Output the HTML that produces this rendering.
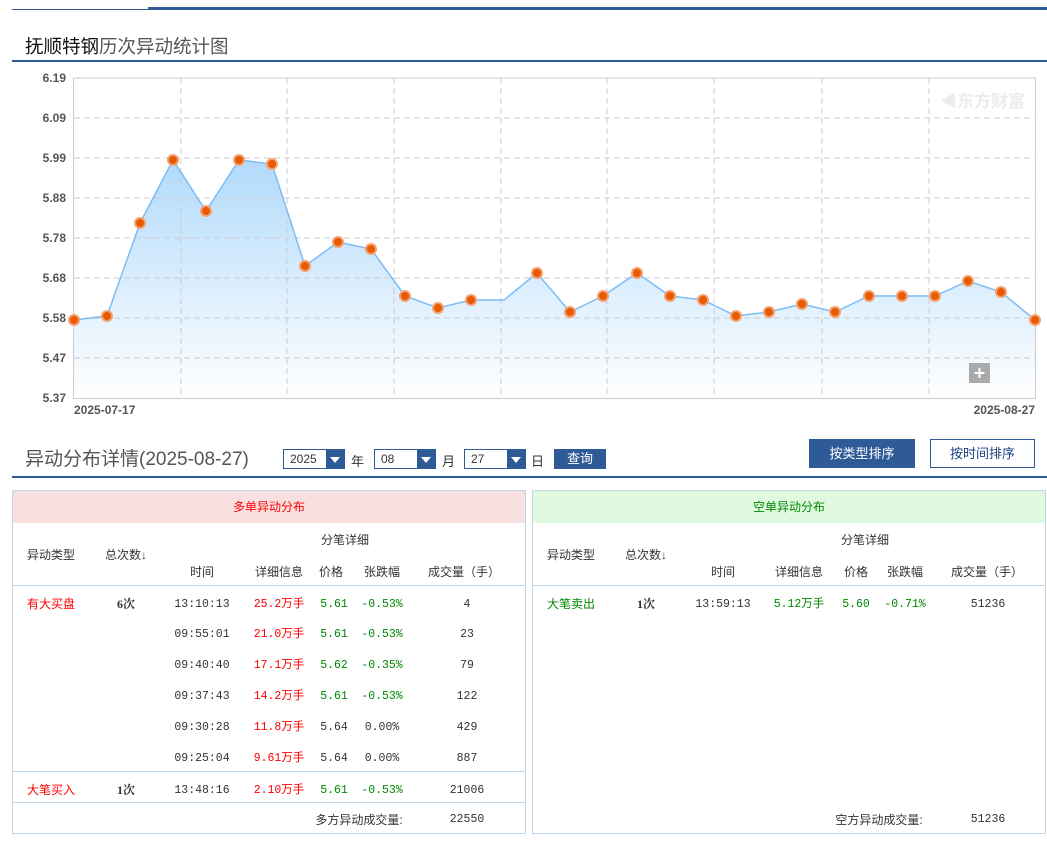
<!DOCTYPE html>
<html><head><meta charset="utf-8"><style>
*{margin:0;padding:0;box-sizing:border-box}
body{width:1047px;height:842px;background:#fff;font-family:"Liberation Sans","Noto Sans CJK SC",sans-serif;position:relative;overflow:hidden;color:#333}
.abs{position:absolute}
.box{position:absolute;border:1px solid #c0d6e8;top:490px;height:344px;width:514px}
.box .hd{height:32px;line-height:32px;text-align:center;font-size:12px}
.t{position:absolute;font-size:12px;white-space:nowrap;transform:translateX(-50%)}
.m{font-family:"Liberation Mono","Noto Sans CJK SC",monospace;font-size:11.5px;margin-top:2px}
.ln{position:absolute;left:0;right:0;height:1px;background:#c0d6e8}
.red{color:#f00}.grn{color:#080}
.sel{position:absolute;top:449px;height:20px;border:1px solid #2e5a96;background:#fff;font-size:12px;line-height:18px;padding-left:6px}
.sel i{position:absolute;right:0;top:0;width:18px;height:18px;background:#2e5a96}
.sel i:after{content:"";position:absolute;left:4px;top:7px;border-left:5px solid transparent;border-right:5px solid transparent;border-top:6px solid #fff}
</style></head><body>
<div class="abs" style="left:12px;top:9px;width:136px;height:1px;background:#2e5a96"></div>
<div class="abs" style="left:148px;top:7px;width:899px;height:3px;background:#2e5a96"></div>
<div class="abs" style="left:25px;top:33px;font-size:18.5px;color:#555"><span style="color:#111">抚顺特钢</span>历次异动统计图</div>
<div class="abs" style="left:12px;top:60px;width:1035px;height:2px;background:#2e5a96"></div>

<svg class="abs" style="left:0;top:0" width="1047" height="420">
<defs><linearGradient id="g" x1="0" y1="0" x2="0" y2="1"><stop offset="0" stop-color="#a9d6fb"/><stop offset="1" stop-color="#fff"/></linearGradient></defs>
<g font-size="12" fill="#555" text-anchor="end" font-family="Liberation Sans" font-weight="bold">
<text x="66" y="82">6.19</text><text x="66" y="122">6.09</text><text x="66" y="162">5.99</text><text x="66" y="202">5.88</text><text x="66" y="242">5.78</text><text x="66" y="282">5.68</text><text x="66" y="322">5.58</text><text x="66" y="362">5.47</text><text x="66" y="402">5.37</text>
</g>
<text x="74" y="414" font-size="12" fill="#555" font-weight="bold" font-family="Liberation Sans">2025-07-17</text>
<text x="1035" y="414" font-size="12" fill="#555" font-weight="bold" text-anchor="end" font-family="Liberation Sans">2025-08-27</text>
<path d="M74,320 L107,316 L140,223 L173,160 L206,211 L239,160 L272,164 L305,266 L338,242 L371,249 L405,296 L438,308 L471,300 L504,300 L537,273 L570,312 L603,296 L637,273 L670,296 L703,300 L736,316 L769,312 L802,304 L835,312 L869,296 L902,296 L935,296 L968,281 L1001,292 L1035,320 L1035,398 L74,398Z" fill="url(#g)" opacity="0.9"/>
<g stroke="#ccc" stroke-dasharray="6,4" stroke-width="1">
<path d="M74,118H1035M74,158H1035M74,198H1035M74,238H1035M74,278H1035M74,318H1035M74,358H1035"/>
<path d="M181,78V398M287,78V398M394,78V398M501,78V398M607,78V398M714,78V398M822,78V398M929,78V398"/>
</g>
<path d="M73.5,78V398.5H1035.5V78H73.5" fill="none" stroke="#ccc"/>
<path d="M74,320 L107,316 L140,223 L173,160 L206,211 L239,160 L272,164 L305,266 L338,242 L371,249 L405,296 L438,308 L471,300 L504,300 L537,273 L570,312 L603,296 L637,273 L670,296 L703,300 L736,316 L769,312 L802,304 L835,312 L869,296 L902,296 L935,296 L968,281 L1001,292 L1035,320" fill="none" stroke="#7cbcf5" stroke-width="1.5"/>
<g fill="#e85a00" stroke="#f5a070" stroke-width="2">
<circle cx="74" cy="320" r="5"/><circle cx="107" cy="316" r="5"/><circle cx="140" cy="223" r="5"/><circle cx="173" cy="160" r="5"/><circle cx="206" cy="211" r="5"/><circle cx="239" cy="160" r="5"/><circle cx="272" cy="164" r="5"/><circle cx="305" cy="266" r="5"/><circle cx="338" cy="242" r="5"/><circle cx="371" cy="249" r="5"/><circle cx="405" cy="296" r="5"/><circle cx="438" cy="308" r="5"/><circle cx="471" cy="300" r="5"/><circle cx="537" cy="273" r="5"/><circle cx="570" cy="312" r="5"/><circle cx="603" cy="296" r="5"/><circle cx="637" cy="273" r="5"/><circle cx="670" cy="296" r="5"/><circle cx="703" cy="300" r="5"/><circle cx="736" cy="316" r="5"/><circle cx="769" cy="312" r="5"/><circle cx="802" cy="304" r="5"/><circle cx="835" cy="312" r="5"/><circle cx="869" cy="296" r="5"/><circle cx="902" cy="296" r="5"/><circle cx="935" cy="296" r="5"/><circle cx="968" cy="281" r="5"/><circle cx="1001" cy="292" r="5"/><circle cx="1035" cy="320" r="5"/>
</g>
<text x="1025" y="107" text-anchor="end" font-size="17" fill="#ececec" font-weight="bold" font-family="Noto Sans CJK SC">◀东方财富</text>
<rect x="969" y="363" width="21" height="20" fill="#aaa"/>
<path d="M979.5,368V378M974.5,373H984.5" stroke="#fff" stroke-width="2"/>
</svg>

<div class="abs" style="left:25px;top:444px;font-size:19px;color:#555">异动分布详情(2025-08-27)</div>
<div class="sel" style="left:283px;width:62px">2025<i></i></div>
<div class="abs" style="left:351px;top:451px;font-size:13px">年</div>
<div class="sel" style="left:374px;width:62px">08<i></i></div>
<div class="abs" style="left:442px;top:451px;font-size:13px">月</div>
<div class="sel" style="left:464px;width:62px">27<i></i></div>
<div class="abs" style="left:531px;top:451px;font-size:13px">日</div>
<div class="abs" style="left:554px;top:449px;width:52px;height:20px;background:#2e5a96;color:#fff;font-size:13px;text-align:center;line-height:20px">查询</div>
<div class="abs" style="left:809px;top:439px;width:106px;height:29px;background:#2e5a96;color:#fff;font-size:13px;text-align:center;line-height:29px">按类型排序</div>
<div class="abs" style="left:930px;top:439px;width:105px;height:29px;border:1px solid #2e5a96;color:#1a3f80;font-size:13px;text-align:center;line-height:27px">按时间排序</div>
<div class="abs" style="left:12px;top:476px;width:1035px;height:2px;background:#2e5a96"></div>

<div class="box" style="left:12px;width:514px">
<div class="hd red" style="background:#f9e0e0">多单异动分布</div>
<div class="t" style="left:38px;top:55px">异动类型</div>
<div class="t" style="left:113px;top:55px">总次数↓</div>
<div class="t" style="left:332px;top:40px">分笔详细</div>
<div class="t" style="left:189px;top:72px">时间</div><div class="t" style="left:266px;top:72px">详细信息</div><div class="t" style="left:318px;top:72px">价格</div><div class="t" style="left:369px;top:72px">张跌幅</div><div class="t" style="left:451px;top:72px">成交量（手）</div>
<div class="ln" style="top:94px"></div>
<div class="t red" style="left:38px;top:104px">有大买盘</div><div class="t" style="left:113px;top:104px;font-weight:bold;font-family:'Liberation Serif','Noto Serif CJK SC',serif">6次</div>
<div class="t m" style="left:189px;top:105px">13:10:13</div><div class="t m red" style="left:266px;top:102px">25.2万手</div><div class="t m grn" style="left:321px;top:105px">5.61</div><div class="t m grn" style="left:369px;top:105px">-0.53%</div><div class="t m" style="left:454px;top:105px">4</div>
<div class="t m" style="left:189px;top:135px">09:55:01</div><div class="t m red" style="left:266px;top:132px">21.0万手</div><div class="t m grn" style="left:321px;top:135px">5.61</div><div class="t m grn" style="left:369px;top:135px">-0.53%</div><div class="t m" style="left:454px;top:135px">23</div>
<div class="t m" style="left:189px;top:166px">09:40:40</div><div class="t m red" style="left:266px;top:163px">17.1万手</div><div class="t m grn" style="left:321px;top:166px">5.62</div><div class="t m grn" style="left:369px;top:166px">-0.35%</div><div class="t m" style="left:454px;top:166px">79</div>
<div class="t m" style="left:189px;top:197px">09:37:43</div><div class="t m red" style="left:266px;top:194px">14.2万手</div><div class="t m grn" style="left:321px;top:197px">5.61</div><div class="t m grn" style="left:369px;top:197px">-0.53%</div><div class="t m" style="left:454px;top:197px">122</div>
<div class="t m" style="left:189px;top:228px">09:30:28</div><div class="t m red" style="left:266px;top:225px">11.8万手</div><div class="t m" style="left:321px;top:228px">5.64</div><div class="t m" style="left:369px;top:228px">0.00%</div><div class="t m" style="left:454px;top:228px">429</div>
<div class="t m" style="left:189px;top:259px">09:25:04</div><div class="t m red" style="left:266px;top:256px">9.61万手</div><div class="t m" style="left:321px;top:259px">5.64</div><div class="t m" style="left:369px;top:259px">0.00%</div><div class="t m" style="left:454px;top:259px">887</div>
<div class="ln" style="top:280px"></div>
<div class="t red" style="left:38px;top:290px">大笔买入</div><div class="t" style="left:113px;top:290px;font-weight:bold;font-family:'Liberation Serif','Noto Serif CJK SC',serif">1次</div>
<div class="t m" style="left:189px;top:291px">13:48:16</div><div class="t m red" style="left:266px;top:288px">2.10万手</div><div class="t m grn" style="left:321px;top:291px">5.61</div><div class="t m grn" style="left:369px;top:291px">-0.53%</div><div class="t m" style="left:454px;top:291px">21006</div>
<div class="ln" style="top:311px"></div>
<div class="t" style="left:346px;top:320px">多方异动成交量:</div><div class="t m" style="left:454px;top:320px">22550</div>
</div>

<div class="box" style="left:532px;width:514px">
<div class="hd grn" style="background:#e0fae0">空单异动分布</div>
<div class="t" style="left:38px;top:55px">异动类型</div>
<div class="t" style="left:113px;top:55px">总次数↓</div>
<div class="t" style="left:332px;top:40px">分笔详细</div>
<div class="t" style="left:190px;top:72px">时间</div><div class="t" style="left:266px;top:72px">详细信息</div><div class="t" style="left:323px;top:72px">价格</div><div class="t" style="left:372px;top:72px">张跌幅</div><div class="t" style="left:454px;top:72px">成交量（手）</div>
<div class="ln" style="top:94px"></div>
<div class="t grn" style="left:38px;top:104px">大笔卖出</div><div class="t" style="left:113px;top:104px;font-weight:bold;font-family:'Liberation Serif','Noto Serif CJK SC',serif">1次</div>
<div class="t m" style="left:190px;top:105px">13:59:13</div><div class="t m grn" style="left:266px;top:102px">5.12万手</div><div class="t m grn" style="left:323px;top:105px">5.60</div><div class="t m grn" style="left:372px;top:105px">-0.71%</div><div class="t m" style="left:455px;top:105px">51236</div>
<div class="t" style="left:346px;top:320px">空方异动成交量:</div><div class="t m" style="left:455px;top:320px">51236</div>
</div>
</body></html>
